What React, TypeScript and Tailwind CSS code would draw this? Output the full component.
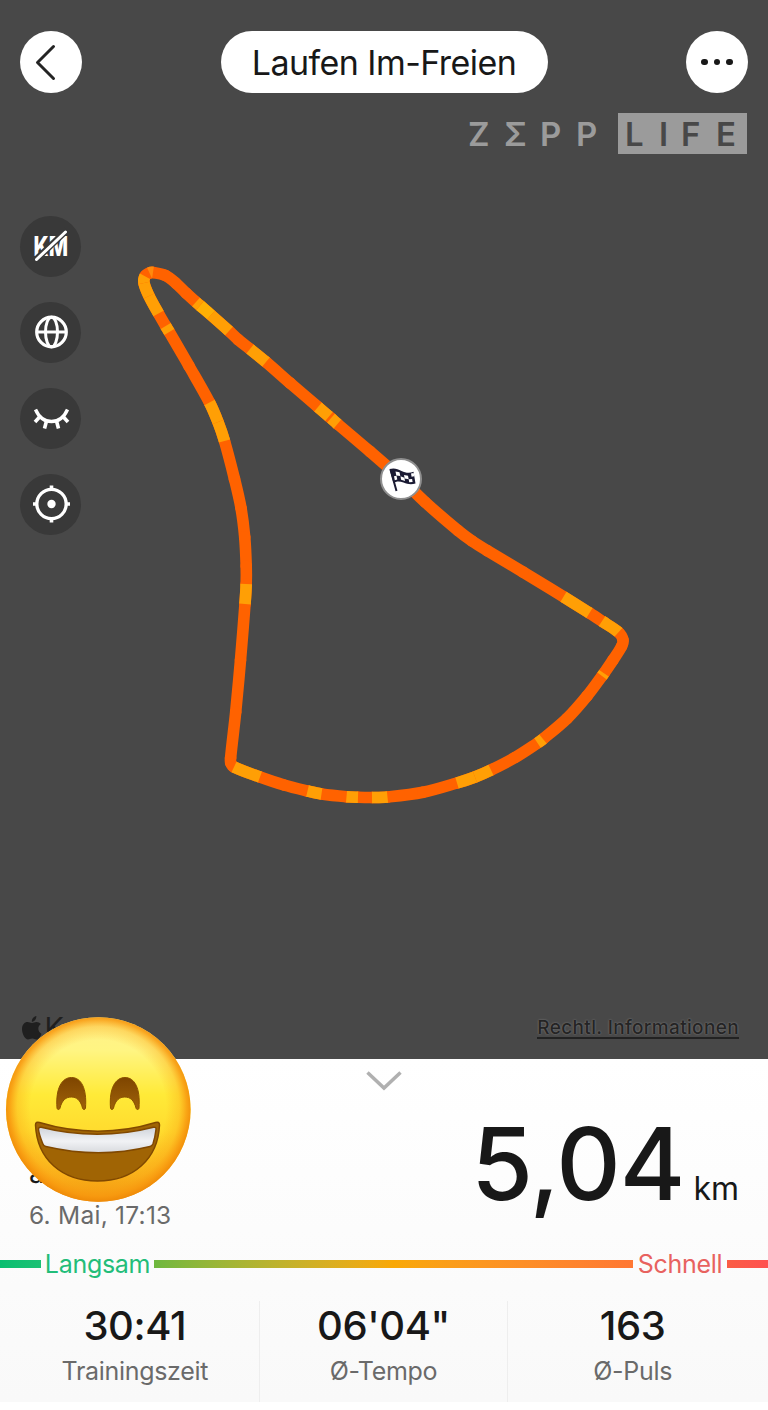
import type { ReactNode } from 'react'

type RoutePoint = [x: number, y: number, color?: string]

const FAST = '#ff6200'
const MEDIUM = '#ff9f05'

// the colour of a point applies to the stretch that starts there
const ROUTE: RoutePoint[] = [
  [401, 478.5],
  [370, 451.5],
  [337.5, 424, MEDIUM],
  [331, 418.2],
  [329, 416.5, MEDIUM],
  [318, 407],
  [290, 383],
  [266, 362, MEDIUM],
  [250, 349],
  [238, 339.5],
  [229, 331, MEDIUM],
  [211, 315, '#ffb004'],
  [200, 305.5, MEDIUM],
  [196, 302],
  [186, 293],
  [176, 283.3],
  [165.5, 275.5],
  [153, 272.5, '#ff8a0c'],
  [149.5, 273],
  [145, 276.2, MEDIUM],
  [144, 283, MEDIUM],
  [149, 296, MEDIUM],
  [158.5, 313.5],
  [165.7, 326, MEDIUM],
  [169.3, 332],
  [189, 366],
  [209.5, 402.5, MEDIUM],
  [218, 422, MEDIUM],
  [224.5, 441],
  [234.5, 479],
  [241, 508],
  [244.7, 537],
  [246.2, 566],
  [246.2, 584, MEDIUM],
  [245, 604],
  [240.5, 660],
  [235.7, 712],
  [230.6, 758],
  [230.8, 763],
  [234, 767, MEDIUM],
  [260, 777],
  [284, 785],
  [307.5, 791, MEDIUM],
  [321.5, 794],
  [346.5, 796.8, MEDIUM],
  [358, 797.3],
  [372, 797.5, MEDIUM],
  [387.5, 797],
  [423, 792.3],
  [457, 783, MEDIUM],
  [475, 777, MEDIUM],
  [491, 770],
  [515, 757.5],
  [537.5, 743, MEDIUM],
  [543, 739],
  [567, 718.5],
  [587, 696],
  [602, 676, MEDIUM],
  [604, 673.3],
  [613, 660],
  [621.5, 646.5],
  [623, 640],
  [618.5, 632.3, MEDIUM],
  [602, 621.2],
  [589.5, 613, MEDIUM],
  [563.5, 596.8],
  [523, 572],
  [487, 550.5],
  [472, 541],
  [458, 530.5],
  [425, 502],
  [401, 478.5]
]

const segmentPath = (i: number) => {
  const p0 = ROUTE[Math.max(i - 1, 0)]
  const p1 = ROUTE[i]
  const p2 = ROUTE[i + 1]
  const p3 = ROUTE[Math.min(i + 2, ROUTE.length - 1)]
  // limit the tangents to the length of the segment so uneven spacing doesn't overshoot
  const len = Math.hypot(p2[0] - p1[0], p2[1] - p1[1])
  const t1 = Math.hypot(p2[0] - p0[0], p2[1] - p0[1]) || 1
  const t2 = Math.hypot(p3[0] - p1[0], p3[1] - p1[1]) || 1
  const c1x = p1[0] + ((p2[0] - p0[0]) / t1) * (len / 3)
  const c1y = p1[1] + ((p2[1] - p0[1]) / t1) * (len / 3)
  const c2x = p2[0] - ((p3[0] - p1[0]) / t2) * (len / 3)
  const c2y = p2[1] - ((p3[1] - p1[1]) / t2) * (len / 3)
  return `M${p1[0]} ${p1[1]}C${c1x} ${c1y} ${c2x} ${c2y} ${p2[0]} ${p2[1]}`
}

function Route() {
  const segments = ROUTE.slice(0, -1)
  return (
    <svg
      className="absolute inset-0"
      width="768"
      height="1059"
      viewBox="0 0 768 1059"
      fill="none"
      strokeWidth="11.6"
    >
      {segments.map((_, i) => (
        <path key={i} d={segmentPath(i)} stroke={FAST} strokeLinecap="round" />
      ))}
      {segments.map(
        (point, i) =>
          point[2] && <path key={i} d={segmentPath(i)} stroke={point[2]} />
      )}
      <circle cx="401" cy="479" r="20" fill="#fff" stroke="#8f8f8f" strokeWidth="2" />
      <g transform="translate(388.500 467)">
        <path d="M2 2.500 8 24" stroke="#1a1a33" strokeWidth="2" />
        <path
          d="M1 2C6 .5 9 2 13 4s8 2.500 12 .8L27 16.500c-5 1.500-8 .5-12-1s-7-1.500-10 .5z"
          fill="#1a1a33"
        />
        <path
          d="m7 4.500 4 .8.8 3.700-4-.6zM15.500 8l4 .8.7 3.400-4-.8zM22.500 6.500l2.700-.4.6 3.200-2.700.4zM12 9.300l3.800 1.500.8 3.200-4-1.200zM20.200 12.300l3.400-.2.5 3-3.400.1zM5.500 9.200l2.500-.4.8 3.800-2.500.6z"
          fill="#fff"
        />
      </g>
    </svg>
  )
}

function MapButton({ children }: { children: ReactNode }) {
  return (
    <button className="flex size-[61px] items-center justify-center rounded-full bg-[#393939]">
      <svg
        className="overflow-visible"
        width="40"
        height="40"
        viewBox="0 0 40 40"
        fill="none"
        stroke="#fff"
        strokeWidth="3"
      >
        {children}
      </svg>
    </button>
  )
}

function MapControls() {
  return (
    <div className="flex flex-col gap-[25px]">
      <MapButton>
        <text
          x="2.500"
          y="30"
          textLength="34.500"
          lengthAdjust="spacingAndGlyphs"
          fontSize="27"
          fontWeight="800"
          fill="#fff"
          stroke="none"
        >
          KM
        </text>
        <path d="M3.500 35 36 4" stroke="#393939" strokeWidth="6.500" />
        <path d="M5.500 33.500 34.500 6" strokeWidth="3" strokeLinecap="round" />
      </MapButton>
      <MapButton>
        <circle cx="20.500" cy="20" r="14.800" strokeWidth="3.200" />
        <ellipse cx="20.500" cy="20" rx="6" ry="14.800" />
        <path d="M5.500 20h30" />
      </MapButton>
      <MapButton>
        <path d="M4.500 11.500C8 19.500 14 23.500 20.500 23.500S33 19.500 36.500 11.500" strokeWidth="3.400" />
        <path d="M9 18.500 4 24M32 18.500l5 5.500M15.500 23l-2 7.500M25.500 23l2 7.500" strokeWidth="3.600" />
      </MapButton>
      <MapButton>
        <circle cx="20.500" cy="20" r="14.700" strokeWidth="3.300" />
        <circle cx="20.500" cy="20" r="4.200" fill="#fff" stroke="none" />
        <path d="M20.500 1.500v5M20.500 33.500v5M2 20h5M34 20h5" strokeWidth="3.600" />
      </MapButton>
    </div>
  )
}

function Brand() {
  return (
    <div className="flex h-[41px] items-center text-[33px] leading-none font-semibold text-[#9b9b9b]">
      <span className="w-[36px] pt-px">Z</span>
      <span className="w-[36px] pt-px">Σ</span>
      <span className="w-[36px] pt-px">P</span>
      <span className="w-[42px] pt-px">P</span>
      <div className="flex h-[41px] w-[129px] items-center bg-[#9b9b9b] pt-px pl-[7px] text-[#484848]">
        <span className="w-[34px]">L</span>
        <span className="w-[22px]">I</span>
        <span className="w-[35px]">F</span>
        <span>E</span>
      </div>
    </div>
  )
}

function Emoji() {
  return (
    <svg
      className="absolute top-[1016px] left-[5px]"
      width="187"
      height="187"
      viewBox="0 0 187 187"
    >
      <defs>
        <linearGradient id="face" x1="0" y1="0" x2="0" y2="1">
          <stop offset="0" stopColor="#fff08a" />
          <stop offset="0.18" stopColor="#fff582" />
          <stop offset="0.42" stopColor="#ffea38" />
          <stop offset="0.62" stopColor="#ffdb2e" />
          <stop offset="0.85" stopColor="#fab41c" />
          <stop offset="1" stopColor="#ef920b" />
        </linearGradient>
        <radialGradient id="rim" cx="0.5" cy="0.49" r="0.51">
          <stop offset="0.72" stopColor="#fba415" stopOpacity="0" />
          <stop offset="0.86" stopColor="#fba415" stopOpacity="0.35" />
          <stop offset="0.94" stopColor="#f8990f" stopOpacity="0.85" />
          <stop offset="1" stopColor="#ef8a08" />
        </radialGradient>
        <linearGradient id="eye" x1="0" y1="0" x2="0" y2="1">
          <stop offset="0" stopColor="#7e4500" />
          <stop offset="1" stopColor="#9f6209" />
        </linearGradient>
        <linearGradient id="teeth" x1="0" y1="0" x2="0" y2="1">
          <stop offset="0" stopColor="#cfd3da" />
          <stop offset="0.55" stopColor="#f1f2f5" />
          <stop offset="1" stopColor="#d8dade" />
        </linearGradient>
      </defs>
      <circle cx="93.300" cy="93.500" r="92.300" fill="url(#face)" />
      <circle cx="93.300" cy="93.500" r="92.300" fill="url(#rim)" />
      <g fill="url(#eye)" stroke="#8a5000" strokeWidth="1">
        <path d="M52 92c-1.500-20 5-30.500 14.500-30.500S82 72 80.500 92c-.3 2-2.500 2-3 0-2-8-6-11-11.200-11S57 84 55 92c-.5 2-2.700 2-3 0z" />
        <path d="M105.500 92c-1.500-20 5-30.500 14.500-30.500s15.500 10.500 14 30.500c-.3 2-2.500 2-3 0-2-8-6-11-11.200-11s-9.300 3-11.300 11c-.5 2-2.700 2-3 0z" />
      </g>
      <path
        d="M30.500 109c0-2.500 1.500-3.300 4-2.500 38 11.500 79 11.500 116 0 2.500-.8 4 0 4 2.500-1.500 34-26 56-62 56s-60.500-22-62-56z"
        fill="#a06404"
        stroke="#804800"
        strokeWidth="1.500"
      />
      <path
        d="M33.500 113.500c-.2-1.800 1-2.700 2.800-2.200 36 9.300 76 9.300 112 0 2-.5 3 .4 2.700 2.200-.6 5-1.600 10-3 14.300-.6 1.500-1.500 2.300-3 2.600-34 8.300-69 8.300-104.200 0-1.500-.3-2.500-1.100-3-2.600-1.600-4.300-3.700-9.300-4.300-14.300z"
        fill="url(#teeth)"
        stroke="#804800"
        strokeWidth="1.500"
      />
    </svg>
  )
}

function AppleKarten() {
  return (
    <div className="flex items-center gap-[3px] text-[29px] leading-none text-[#1f1f1f]">
      <svg width="20" height="24" viewBox="0 0 20 24" fill="currentColor">
        <path d="M10 7C8.500 7 7.300 6 5.600 6 2.500 6 0 8.700 0 13c0 5 3.200 10.500 6 10.500 1.600 0 2.300-1 4.300-1s2.500 1 4.200 1c2.300 0 4.200-3.500 5-5.800-3.900-1.700-4.300-7.500-.6-9.600C17.700 6.700 16 6 14.400 6 12.600 6 11.500 7 10 7zM9.800 5.800C9.600 3 11.800.4 14.300 0c.4 2.900-1.900 5.700-4.500 5.800z" />
      </svg>
      <span>K</span>
    </div>
  )
}

const STATS = [
  { value: '30:41', label: 'Trainingszeit' },
  { value: '06\'04"', label: 'Ø-Tempo' },
  { value: '163', label: 'Ø-Puls' }
]

export default function App() {
  return (
    <div className="relative h-[1410px] w-[768px] overflow-hidden bg-white font-['Inter',sans-serif] text-[#181818]">
      <main className="relative flex h-[1059px] flex-col bg-[#484848]">
        <Route />
        <header className="relative mt-[31px] flex items-center justify-between px-[20px]">
          <button className="flex size-[62px] items-center justify-center rounded-full bg-white">
            <svg width="40" height="40" viewBox="0 0 40 40" fill="none">
              <path
                d="M22.500 4.500 6.500 20.500l16 16"
                stroke="#242424"
                strokeWidth="3"
                strokeLinecap="round"
                strokeLinejoin="round"
              />
            </svg>
          </button>
          <h1 className="flex h-[62px] w-[327px] items-center justify-center rounded-full bg-white pt-[1px] text-[34px] tracking-[-0.55px] whitespace-nowrap">
            Laufen Im-Freien
          </h1>
          <button className="flex size-[62px] items-center justify-center gap-[6px] rounded-full bg-white">
            <span className="size-[6.500px] rounded-full bg-[#181818]" />
            <span className="size-[6.500px] rounded-full bg-[#181818]" />
            <span className="size-[6.500px] rounded-full bg-[#181818]" />
          </button>
        </header>
        <div className="relative mt-5 flex justify-end pr-[21px]">
          <Brand />
        </div>
        <div className="relative mt-[61.500px] ml-[20px]">
          <MapControls />
        </div>
        <footer className="relative mt-auto mb-[17px] flex items-center justify-between pr-[29px] pl-[21.500px]">
          <AppleKarten />
          <a className="mt-[2px] border-b-2 border-[#222] text-[19px] leading-[19px] font-medium tracking-[0.35px] text-[#242424] [text-shadow:0_0_2px_#888]">
            Rechtl. Informationen
          </a>
        </footer>
      </main>

      <section className="h-[343px] bg-linear-to-b from-white to-[#f9f9f9]">
        <div className="flex h-[44px] justify-center pt-3">
          <svg width="36" height="20" viewBox="0 0 36 20" fill="none">
            <path d="m1.500 1.500 16.500 15.500 16.500-15.500" stroke="#b0b0b0" strokeWidth="3.500" />
          </svg>
        </div>
        <div className="flex h-[145px] justify-between pr-[29px] pl-[29px]">
          <div className="flex flex-col pt-[52px]">
            <span className="text-[28px] leading-[36px]">a</span>
            <span className="mt-[9px] text-[24.500px] leading-[30px] tracking-[0.25px] text-[#6a6a6a]">
              6. Mai, 17:13
            </span>
          </div>
          <div className="flex items-baseline">
            <span className="text-[100px] leading-[121px] font-medium tracking-[-1px]">5,04</span>
            <span className="ml-[9px] text-[32px]">km</span>
          </div>
        </div>
        <div className="flex h-8 items-center text-[25px] leading-8 tracking-[-0.3px]">
          <div className="h-2 w-[41px] bg-linear-to-r from-[#08be70] to-[#1bc174]" />
          <span className="w-[113px] text-center text-[#22bd79]">Langsam</span>
          <div className="h-2 w-[479px] bg-linear-to-r from-[#6eb83f] via-[#f9a805] to-[#ff7733]" />
          <span className="w-[94px] text-center text-[#e8625f]">Schnell</span>
          <div className="h-2 w-[41px] bg-linear-to-r from-[#fa5d45] to-[#ff5050]" />
        </div>
        <div className="mt-[21px] grid h-[101px] grid-cols-3 divide-x divide-[#eeeeee] px-[11px]">
          {STATS.map((stat) => (
            <div key={stat.label} className="flex flex-col items-center">
              <span className="text-[40px] leading-[50px] font-medium tracking-[-0.4px]">
                {stat.value}
              </span>
              <span className="mt-[5px] text-[25px] leading-[30px] tracking-[-0.3px] text-[#6a6a6a]">
                {stat.label}
              </span>
            </div>
          ))}
        </div>
      </section>
      <Emoji />
    </div>
  )
}
